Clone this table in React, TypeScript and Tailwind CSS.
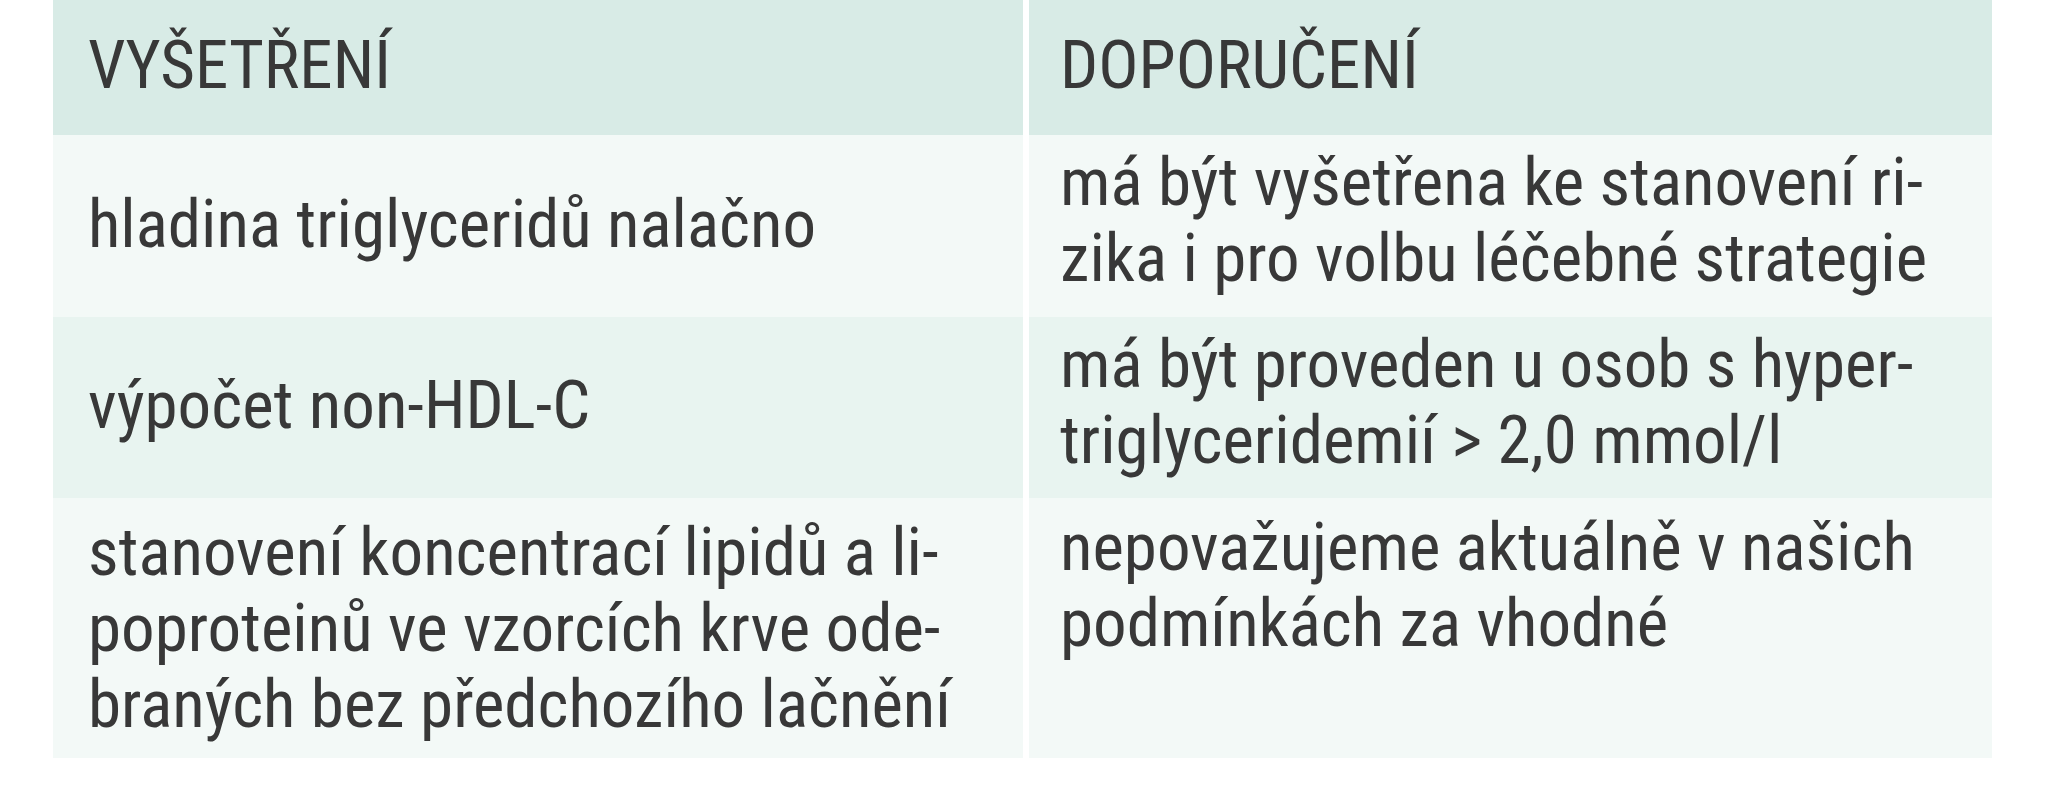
const font = "font-['Roboto',sans-serif] [font-stretch:condensed] text-[67px] leading-[76px] text-[#383838]"

type Row = {
  bg: string
  h: string
  left: string[]
  right: string[]
  padL: string
  padR: string
}

const rows: Row[] = [
  {
    bg: 'bg-[#f3f9f7]',
    h: 'h-[182px]',
    left: ['hladina triglyceridů nalačno'],
    right: ['má být vyšetřena ke stanovení ri-', 'zika i pro volbu léčebné strategie'],
    padL: 'pt-[51px]',
    padR: 'pt-[9px]',
  },
  {
    bg: 'bg-[#e8f4f0]',
    h: 'h-[181px]',
    left: ['výpočet non-HDL-C'],
    right: ['má být proveden u osob s hyper-', 'triglyceridemií > 2,0 mmol/l'],
    padL: 'pt-[50px]',
    padR: 'pt-[9px]',
  },
  {
    bg: 'bg-[#f3f9f7]',
    h: 'h-[260px]',
    left: [
      'stanovení koncentrací lipidů a li-',
      'poproteinů ve vzorcích krve ode-',
      'braných bez předchozího lačnění',
    ],
    right: ['nepovažujeme aktuálně v našich', 'podmínkách za vhodné'],
    padL: 'pt-[16px]',
    padR: 'pt-[11px]',
  },
]

function Lines({ lines }: { lines: string[] }) {
  return (
    <>
      {lines.map((l) => (
        <div key={l} className="whitespace-nowrap">
          {l}
        </div>
      ))}
    </>
  )
}

export default function App() {
  return (
    <div className={`w-full h-[800px] bg-white pl-[53px] ${font}`}>
      <div className="grid grid-cols-[970px_963px] gap-x-[6px]">
        {/* header */}
        <div className="h-[135px] bg-[#d8ebe6] pl-[35px] pt-[27px]">VYŠETŘENÍ</div>
        <div className="h-[135px] bg-[#d8ebe6] pl-[31px] pt-[27px]">DOPORUČENÍ</div>

        {rows.map((r, i) => (
          <div key={i} className="contents">
            <div className={`${r.h} ${r.bg} pl-[35px] ${r.padL}`}>
              <Lines lines={r.left} />
            </div>
            <div className={`${r.h} ${r.bg} pl-[31px] ${r.padR}`}>
              <Lines lines={r.right} />
            </div>
          </div>
        ))}
      </div>
    </div>
  )
}
